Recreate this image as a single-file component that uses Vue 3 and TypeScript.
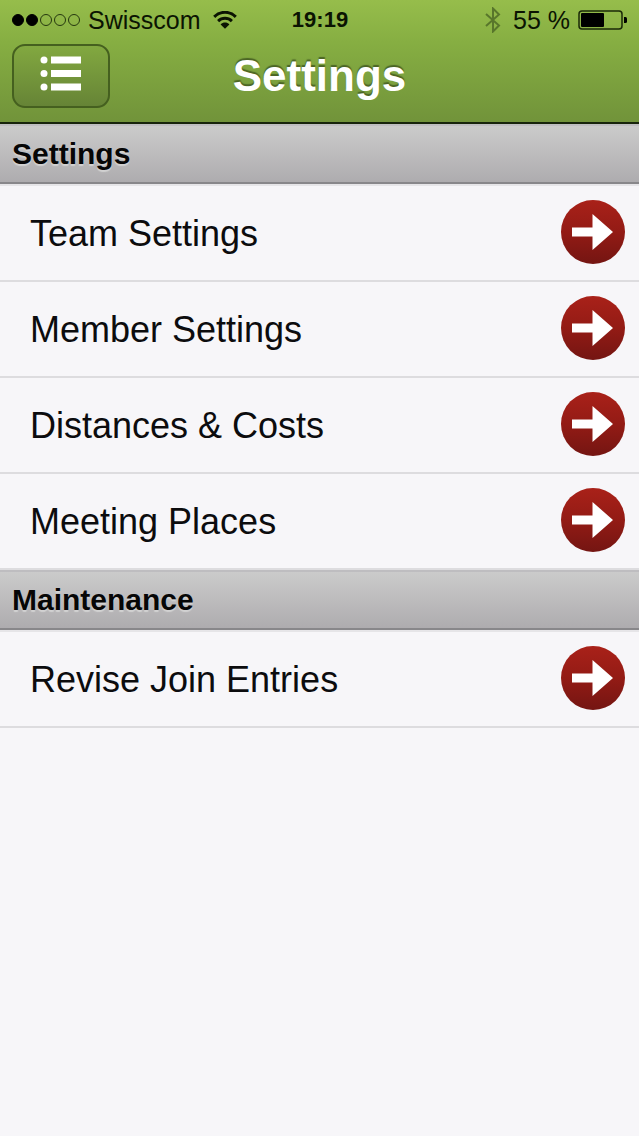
<script setup lang="ts">
interface Section {
  title: string
  items: string[]
}

const signalDots: boolean[] = [true, true, false, false, false]

const battery = 55

const sections: Section[] = [
  {
    title: 'Settings',
    items: ['Team Settings', 'Member Settings', 'Distances & Costs', 'Meeting Places'],
  },
  { title: 'Maintenance', items: ['Revise Join Entries'] },
]
</script>

<template>
  <div class="screen">
    <header class="top">
      <div class="status">
        <div class="carrier">
          <span class="dots">
            <i v-for="(on, i) in signalDots" :key="i" class="dot" :class="{ on }"></i>
          </span>
          <span>Swisscom</span>
          <svg class="wifi" viewBox="0 0 24 18" aria-hidden="true">
            <path d="M1.200 5.800C7.400-.2 16.600-.2 22.800 5.800" />
            <path d="M5.100 10.200c4-3.800 9.800-3.800 13.800 0" />
            <path class="tip" d="M7.600 13.400c2.600-2.400 6.200-2.400 8.800 0L12 17.800z" />
          </svg>
        </div>
        <time class="clock">19:19</time>
        <div class="power">
          <svg class="bluetooth" viewBox="0 0 16 26" aria-hidden="true">
            <path d="M1 7l13 11.500L8 24.500v-23l6 6L1 19" />
          </svg>
          <span>{{ battery }} %</span>
          <svg class="battery" viewBox="0 0 50 20" aria-hidden="true">
            <rect class="shell" x="1" y="1" width="43" height="18" rx="3" />
            <rect x="3" y="3" :width="Math.round(battery * 0.41)" height="14" rx="1" />
            <path d="M46 7h1.500q1.500 0 1.500 1.500v3q0 1.500-1.500 1.500H46z" />
          </svg>
        </div>
      </div>
      <div class="bar">
        <button class="menu" type="button" aria-label="Menu">
          <svg viewBox="0 0 42 36" aria-hidden="true">
            <circle cx="4" cy="4" r="3.500" />
            <circle cx="4" cy="17.500" r="3.500" />
            <circle cx="4" cy="31" r="3.500" />
            <path d="M11 .5h30v7H11zM11 14h30v7H11zM11 27.500h30v7H11z" />
          </svg>
        </button>
        <h1>Settings</h1>
      </div>
    </header>

    <main>
      <section v-for="section in sections" :key="section.title">
        <h2>{{ section.title }}</h2>
        <ul>
          <li v-for="item in section.items" :key="item">
            <a href="#">
              <span class="label">{{ item }}</span>
              <svg class="arrow" viewBox="0 0 64 64" aria-hidden="true">
                <defs>
                  <linearGradient id="disc" x1="0" y1="0" x2="0" y2="1">
                    <stop offset="0" stop-color="#a92119" />
                    <stop offset=".5" stop-color="#931b15" />
                    <stop offset="1" stop-color="#741512" />
                  </linearGradient>
                </defs>
                <circle cx="32" cy="32" r="32" fill="url(#disc)" />
                <path d="M11 27.500h20.500V14L52 32 31.500 50V36.500H11z" fill="#fff" />
              </svg>
            </a>
          </li>
        </ul>
      </section>
    </main>
  </div>
</template>

<style>
body {
  background: #f7f6f9;
}
</style>

<style scoped>
.screen {
  min-height: 100vh;
  background: #f7f6f9;
  color: #0c0c0e;
  font-family: 'Liberation Sans', Arial, Helvetica, sans-serif;
}

.top {
  border-bottom: 2px solid #17240b;
  background: linear-gradient(#96bd4b, #86ae42 35%, #71933a);
}

.status {
  display: grid;
  grid-template-columns: 1fr auto 1fr;
  align-items: center;
  height: 40px;
  padding: 0 11px 0 12px;
  color: #0b1402;
  font-size: 25px;
  line-height: 40px;
}

.carrier,
.power {
  display: flex;
  align-items: center;
}

.power {
  justify-content: flex-end;
  gap: 8px;
}

.dots {
  display: flex;
  gap: 2px;
  margin-right: 8px;
}

.dot {
  box-sizing: border-box;
  width: 12px;
  height: 12px;
  border: 1px solid #26380f;
  border-radius: 50%;
}

.dot.on {
  background: #000;
  border-color: #000;
}

.wifi {
  width: 24px;
  height: 18px;
  margin-left: 12px;
  fill: none;
  stroke: #0b1402;
  stroke-width: 3;
}

.wifi .tip {
  fill: #0b1402;
  stroke: none;
}

.clock {
  font-size: 22px;
  font-weight: bold;
}

.bluetooth {
  width: 16px;
  height: 26px;
  margin-right: 4px;
  fill: none;
  stroke: #58762b;
  stroke-width: 2;
}

.battery {
  width: 50px;
  height: 20px;
  fill: #000;
}

.battery .shell {
  fill: none;
  stroke: #1b2a08;
  stroke-width: 1.5;
}

.bar {
  display: grid;
  grid-template-columns: 1fr auto 1fr;
  align-items: center;
  height: 72px;
  padding: 0 12px 10px;
}

.menu {
  display: flex;
  align-items: center;
  justify-content: center;
  box-sizing: border-box;
  width: 98px;
  height: 64px;
  padding: 0 0 4px;
  border: 2px solid #45601f;
  border-radius: 13px;
  background: linear-gradient(#82a840, #668436);
}

.menu svg {
  width: 42px;
  height: 36px;
  fill: #fff;
}

h1 {
  margin: 0;
  color: #fff;
  font-size: 44px;
  line-height: 64px;
  text-shadow: 0 -2px 1px #4b6525;
}

h2 {
  box-sizing: border-box;
  height: 60px;
  margin: 0;
  padding: 0 12px;
  border-top: 2px solid #bebdc0;
  border-bottom: 2px solid #88878a;
  background: linear-gradient(#cbcbcb, #aeacaf);
  color: #060606;
  font-size: 30px;
  line-height: 56px;
  text-shadow: 0 2px 1px #d2d2d2;
}

ul {
  margin: 0;
  border-top: 2px solid #e6e5e8;
  padding: 0;
  list-style: none;
}

li {
  border-bottom: 2px solid #dddcdf;
}

a {
  display: flex;
  align-items: center;
  justify-content: space-between;
  height: 92px;
  padding: 0 14px 2px 30px;
  color: inherit;
  font-size: 36px;
  text-decoration: none;
}

.label {
  padding-top: 4px;
}

.arrow {
  flex: none;
  width: 64px;
  height: 64px;
}
</style>
